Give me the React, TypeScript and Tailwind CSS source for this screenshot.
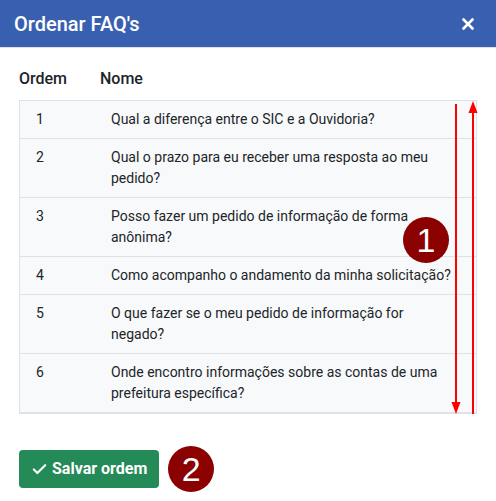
import React from 'react'
import { Check } from 'lucide-react'

const faqs = [
  'Qual a diferença entre o SIC e a Ouvidoria?',
  'Qual o prazo para eu receber uma resposta ao meu pedido?',
  'Posso fazer um pedido de informação de forma anônima?',
  'Como acompanho o andamento da minha solicitação?',
  'O que fazer se o meu pedido de informação for negado?',
  'Onde encontro informações sobre as contas de uma prefeitura específica?'
]

function Badge({ n }: { n: number }) {
  return (
    <div className="flex h-[46px] w-[46px] items-center justify-center rounded-full bg-[#8b0000] font-['Liberation_Sans',sans-serif] text-[34px] leading-none text-white">
      {n}
    </div>
  )
}

export default function App() {
  return (
    <div className="h-[501px] w-[496px] bg-white font-['Roboto',sans-serif] text-[#212529]">
      <header className="flex h-[48px] items-center justify-between border-b border-[#dee2e6] bg-[#3960b0] pl-[14px] pr-[22px]">
        <h1 className="text-[20px] font-medium text-white">Ordenar FAQ's</h1>
        <svg width="12" height="12" viewBox="0 0 12 12" className="text-white">
          <path d="M1.5 1.5 L10.5 10.5 M10.5 1.5 L1.5 10.5" stroke="currentColor" strokeWidth="2.6" strokeLinecap="round" />
        </svg>
      </header>

      <div className="px-[19px] pt-[19px]">
        <div className="flex text-[16px] font-medium leading-6">
          <span className="w-[81px]">Ordem</span>
          <span>Nome</span>
        </div>

        <div className="relative mt-[9px] border border-[#dee2e6] bg-[#f8f9fa] text-[14px] leading-[21px]">
          {faqs.map((q, i) => (
            <div key={i} className="flex border-b border-[#dee2e6] last:border-b-0">
              <div className="w-[83px] shrink-0 py-2 pl-[16px]">{i + 1}</div>
              <div className="py-2 pl-[8px] pr-[20px]">{q}</div>
            </div>
          ))}

          {/* arrows */}
          <svg className="absolute left-[430px] top-[-1px]" width="30" height="315" viewBox="0 0 30 315">
            <line x1="6" y1="4" x2="6" y2="305" stroke="#ff0000" strokeWidth="2" />
            <polygon points="1.5,302 10.5,302 6,314" fill="#ff0000" />
            <line x1="23" y1="10" x2="23" y2="314" stroke="#ff0000" strokeWidth="2" />
            <polygon points="18.5,13 27.5,13 23,1" fill="#ff0000" />
          </svg>
          <div className="absolute left-[383px] top-[116px]">
            <Badge n={1} />
          </div>
        </div>

        <div className="mt-[32px] flex items-center gap-[9px]">
          <button className="flex h-[38px] items-center gap-[4px] rounded-[4px] bg-[#248a57] pl-[12px] pr-[12px] text-[16px] font-bold text-white">
            <Check size={17} strokeWidth={3} />
            Salvar ordem
          </button>
          <Badge n={2} />
        </div>
      </div>
    </div>
  )
}
